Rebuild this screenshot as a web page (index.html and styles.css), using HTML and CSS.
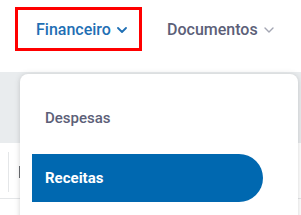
FILE: index.html
```html
<!DOCTYPE html>
<html lang="pt">
<head>
<meta charset="utf-8">
<link rel="stylesheet" href="styles.css">
</head>
<body>
<div class="page">
  <nav class="nav">
    <div class="nav-item active">
      <span>Financeiro</span>
      <svg class="chev" width="10" height="6" viewBox="0 0 10 6"><path d="M1 1l4 4 4-4" fill="none" stroke="currentColor" stroke-width="1.8" stroke-linecap="round" stroke-linejoin="round"/></svg>
    </div>
    <div class="nav-item">
      <span>Documentos</span>
      <svg class="chev" width="10" height="6" viewBox="0 0 10 6"><path d="M1 1l4 4 4-4" fill="none" stroke="currentColor" stroke-width="1.4" stroke-linecap="round" stroke-linejoin="round"/></svg>
    </div>
  </nav>
  <div class="band"></div>
  <div class="table">
    <div class="cell cell-a"></div>
    <div class="cell cell-b"><span class="grip"></span></div>
  </div>
  <div class="menu">
    <div class="menu-item">Despesas</div>
    <div class="menu-item selected">Receitas</div>
  </div>
</div>
</body>
</html>
```

FILE: styles.css
```css
html, body {
  margin: 0;
  padding: 0;
  background: #ffffff;
}
.page {
  position: relative;
  width: 301px;
  height: 215px;
  overflow: hidden;
  font-family: Roboto, "Liberation Sans", sans-serif;
}
.nav {
  display: flex;
  align-items: center;
  height: 72px;
  padding-left: 15px;
  box-sizing: border-box;
  padding-bottom: 14px;
  gap: 25px;
}
.nav-item {
  display: flex;
  align-items: center;
  gap: 6px;
  font-size: 16px;
  font-weight: 500;
  color: #5c6078;
  height: 44px;
  box-sizing: border-box;
}
.nav-item .chev {
  color: #a3a6b3;
  margin-top: 1px;
}
.nav-item.active {
  color: #1f6fb4;
  border: 3px solid #ff0000;
  padding: 0 11px 0 18px;
  width: 127px;
}
.nav-item.active .chev {
  color: #1f6fb4;
}
.band {
  height: 71px;
  background: #e9ecee;
}
.table {
  display: flex;
  height: 56px;
  border-bottom: 1px solid #e4e6e8;
  padding-top: 9px;
  box-sizing: border-box;
}
.cell {
  height: 40px;
}
.cell-a {
  width: 8px;
  border-right: 1px solid #e4e6e8;
}
.cell-b {
  width: 20px;
  display: flex;
  align-items: center;
  padding-left: 10px;
  box-sizing: border-box;
}
.grip {
  width: 2px;
  height: 12px;
  background: #6d6f73;
}
.menu {
  position: absolute;
  left: 20px;
  top: 74px;
  width: 278px;
  height: 160px;
  background: #ffffff;
  border-radius: 8px;
  box-shadow: 0 0 6px rgba(0, 0, 0, 0.12), 0 2px 4px rgba(0, 0, 0, 0.06);
  padding-top: 20px;
  box-sizing: border-box;
  display: flex;
  flex-direction: column;
  gap: 12px;
}
.menu-item {
  height: 48px;
  display: flex;
  align-items: center;
  padding-left: 25px;
  font-size: 15px;
  font-weight: 500;
  color: #5c6078;
}
.menu-item.selected {
  margin-left: 12px;
  width: 231px;
  padding-left: 13px;
  box-sizing: border-box;
  background: #0068b0;
  color: #ffffff;
  font-weight: 700;
  border-radius: 0 24px 24px 0;
}
```
